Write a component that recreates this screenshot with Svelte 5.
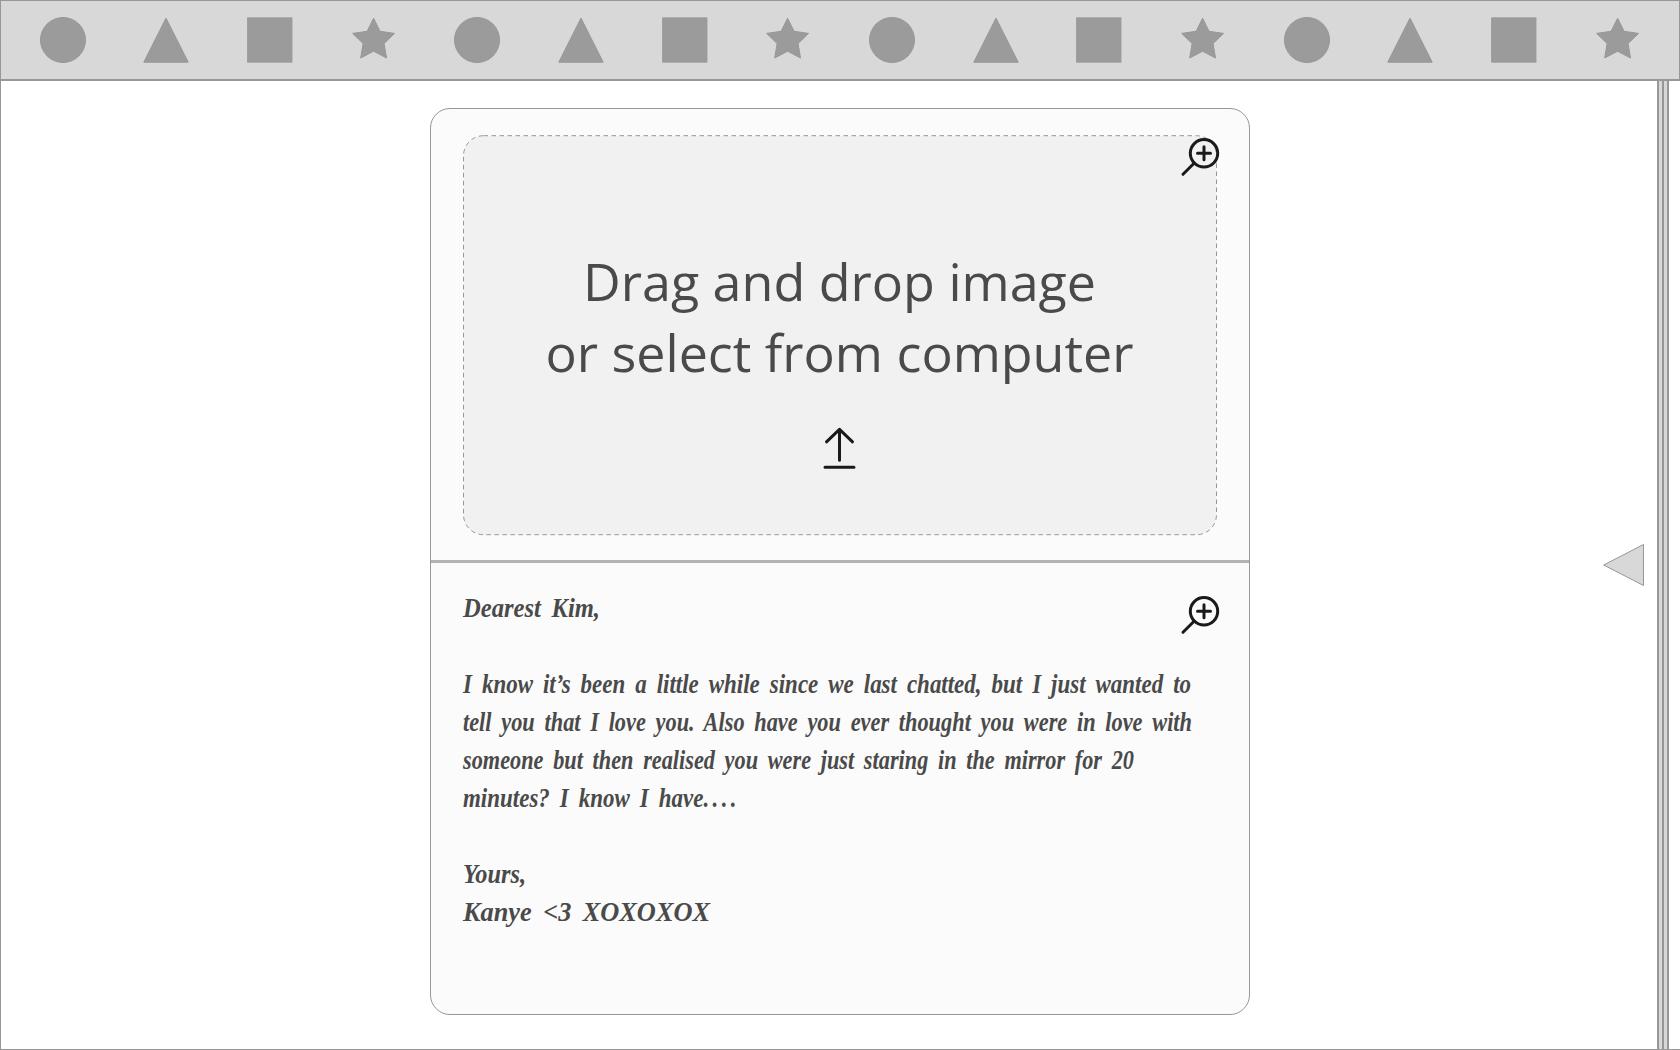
<script>
  const kinds = ['circle', 'triangle', 'square', 'star'];
  const shapes = Array.from({ length: 16 }, (_, i) => kinds[i % 4]);

  const star = Array.from({ length: 10 }, (_, i) => {
    const r = i % 2 ? 11 : 22;
    const a = (i * Math.PI) / 5;
    return `${(22.6 + r * Math.sin(a)).toFixed(2)},${(23.2 - r * Math.cos(a)).toFixed(2)}`;
  }).join(' ');

  // Each line of the letter with its set width
  const letter = [
    { text: 'Dearest Kim,', width: 137 },
    { text: '', width: 0 },
    { text: 'I know it’s been a little while since we last chatted, but I just wanted to', width: 728 },
    { text: 'tell you that I love you. Also have you ever thought you were in love with', width: 729 },
    { text: 'someone but then realised you were just staring in the mirror for 20', width: 671 },
    { text: 'minutes? I know I have', width: 277, tail: '....' },
    { text: '', width: 0 },
    { text: 'Yours,', width: 63 },
    { text: 'Kanye <3 XOXOXOX', width: 247 },
  ];
</script>

{#snippet zoomIcon()}
  <svg class="zoom" width="40" height="40" viewBox="0 0 40 40">
    <circle cx="23" cy="17.3" r="13.7" />
    <path d="M13.3 27 2 38.3M16.5 17.3h13M23 10.8v13" />
  </svg>
{/snippet}

<div class="page">
  <header>
    {#each shapes as kind}
      <svg width="46" height="46" viewBox="0 0 46 46">
        {#if kind === 'circle'}
          <circle cx="23" cy="23" r="22.5" />
        {:else if kind === 'triangle'}
          <polygon points="23,1.1 45.2,45.2 .8,45.2" />
        {:else if kind === 'square'}
          <rect x=".7" y=".9" width="44.2" height="44.2" />
        {:else}
          <polygon points={star} />
        {/if}
      </svg>
    {/each}
  </header>

  <main>
    <article class="card">
      <section class="picture">
        <div class="drop">
          <svg class="outline" width="754" height="401">
            <rect x=".5" y=".7" width="753" height="399" rx="20" />
          </svg>
          <p>Drag and drop image<br />or select from computer</p>
          <svg class="upload" width="34" height="44" viewBox="0 0 34 44">
            <path d="M16.5 34.3V3.3M3.5 15.8 16.5 3.3 29.5 15.8M2 41.3h29" />
          </svg>
        </div>
        {@render zoomIcon()}
      </section>
      <section class="message">
        <div class="letter">
          {#each letter as { text, width, tail }}
            <svg class="line" width="740" height="38">
              {#if text}
                <text x="0" y="27" textLength={width} lengthAdjust="spacingAndGlyphs">{text}{#if tail}<tspan class="tail">{tail}</tspan>{/if}</text>
              {/if}
            </svg>
          {/each}
        </div>
        {@render zoomIcon()}
      </section>
    </article>
    <svg class="pull" width="42" height="44" viewBox="0 0 42 44">
      <polygon points=".7,22 40.5,1.5 40.5,42.5" />
    </svg>
    <div class="rail"><i></i><i></i></div>
  </main>
</div>

<style>
  :global(body) { margin: 0; background: #fff; }
  .page {
    box-sizing: border-box;
    width: 1680px;
    height: 1050px;
    overflow: hidden;
    display: flex;
    flex-direction: column;
    font-family: 'Open Sans', 'Noto Sans', sans-serif;
    color: #4a4a4a;
  }
  header {
    box-sizing: border-box;
    height: 81px;
    flex: none;
    display: flex;
    justify-content: space-between;
    padding: 16px 38.4px 0 38.5px;
    border: 1px solid #979797;
    border-bottom-width: 2px;
    background: #d8d8d8;
  }
  header svg { fill: #9b9b9b; stroke: #979797; stroke-width: 1; }
  svg { display: block; flex: none; overflow: visible; }
  main {
    box-sizing: border-box;
    flex: 1;
    display: flex;
    align-items: flex-start;
    padding: 27px 11px 0 429px;
    border-left: 1px solid #979797;
    border-bottom: 1px solid #979797;
  }
  .card {
    box-sizing: border-box;
    width: 820px;
    height: 907px;
    flex: none;
    border: 1px solid #979797;
    border-radius: 20px;
    background: #fbfbfb;
  }
  .picture {
    position: relative;
    box-sizing: border-box;
    height: 451px;
    padding: 26px 0 0 32px;
  }
  .drop {
    position: relative;
    box-sizing: border-box;
    width: 754px;
    height: 401px;
    padding-right: 1px;
    display: flex;
    flex-direction: column;
    align-items: center;
  }
  .outline { position: absolute; inset: 0; }
  .outline rect { fill: #f1f1f1; stroke: #979797; stroke-dasharray: 4.5 3.5; }
  .drop p {
    position: relative;
    margin: 110px 0 0;
    font-size: 52px;
    line-height: 71px;
    text-align: center;
    white-space: nowrap;
  }
  .upload { position: relative; margin-top: 39.4px; }
  .upload, .zoom {
    fill: none;
    stroke: #1a1a1a;
    stroke-width: 3;
    stroke-linecap: round;
    stroke-linejoin: round;
  }
  .zoom { position: absolute; left: 750px; top: 27px; }
  .message {
    position: relative;
    box-sizing: border-box;
    height: 454px;
    padding: 27px 0 0 32px;
    border-top: 3px solid #b4b4b4;
  }
  .message .zoom { top: 31px; }
  .line text {
    font: italic 700 27px 'Brush Script MT', 'Brush Script Std', 'Liberation Serif', cursive;
    word-spacing: 5px;
    fill: #4a4a4a;
  }
  .line .tail { letter-spacing: 4px; }
  .pull { margin: 435px 0 0 353px; }
  .pull polygon { fill: #d8d8d8; stroke: #979797; }
  .rail {
    box-sizing: border-box;
    display: flex;
    gap: 2px;
    width: 12px;
    height: 968px;
    flex: none;
    margin: -27px 0 0 auto;
    border: solid #979797;
    border-width: 0 2px;
    background: #979797;
  }
  .rail i { flex: 1; background: #d8d8d8; }
</style>
